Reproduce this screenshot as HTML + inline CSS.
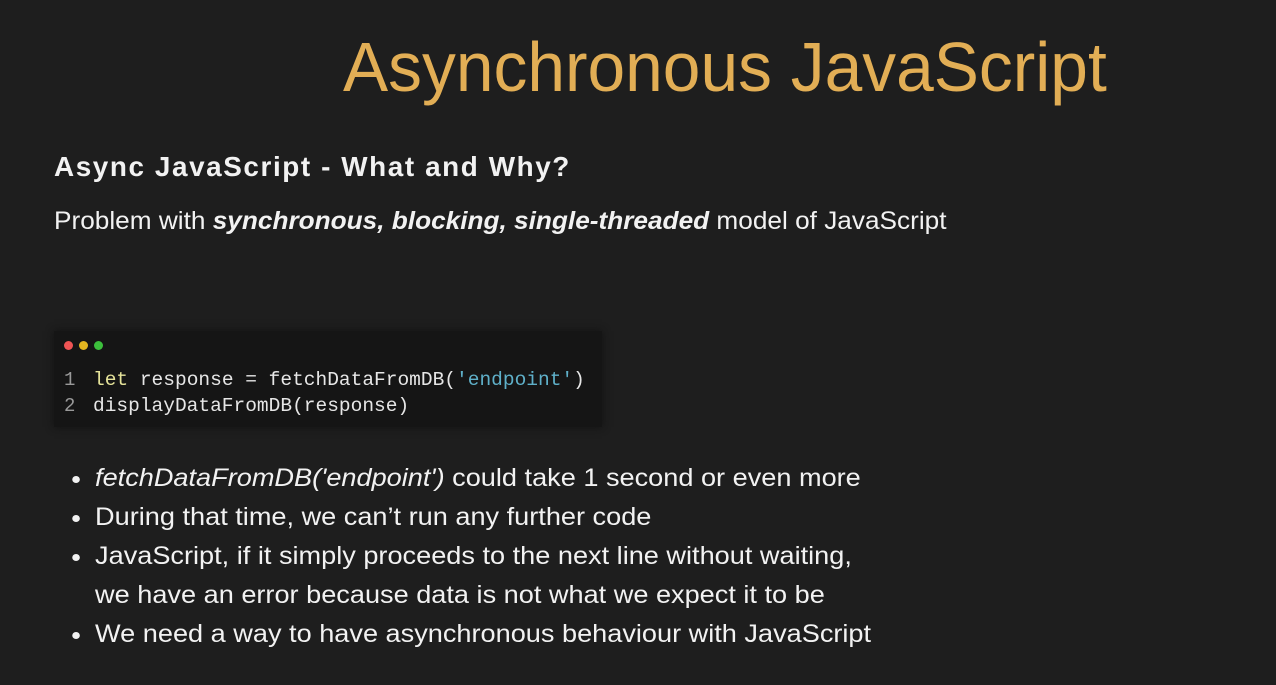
<!DOCTYPE html>
<html><head><style>
body{margin:0;width:1276px;height:685px;background:#1e1e1e;overflow:hidden;position:relative;font-family:"Liberation Sans",sans-serif;color:#f2f2f2}
.a{position:absolute;white-space:nowrap;transform-origin:left top}
.t{left:343px;top:27px;font-size:70px;color:#e2ae55;transform:scaleX(0.967)}
.h{left:54px;top:151px;font-size:28px;font-weight:bold;transform:scaleX(0.995);letter-spacing:1.6px}
.p{left:54px;top:207px;font-size:25px;transform:scaleX(1.048)}
.code{left:54px;top:331px;width:548px;height:96px;background:#151515;box-shadow:0 0 8px #111}
.dot{position:absolute;top:10px;width:9px;height:9px;border-radius:50%}
.m{font-family:"Liberation Mono",monospace;font-size:19px;color:#e6e6e6;position:absolute;left:39px;transform-origin:left top;transform:scaleX(1.027)}
.n{font-family:"Liberation Mono",monospace;font-size:19px;color:#999;position:absolute;left:10px}
.k{color:#e5e39a}
.s{color:#5fb0c9}
ul{position:absolute;left:69px;top:459px;margin:0;padding:0 0 0 24px;font-size:25px;line-height:39px;transform-origin:left top;transform:scaleX(1.085)}
li{white-space:nowrap}
</style></head><body>
<div class="a t">Asynchronous JavaScript</div>
<div class="a h">Async JavaScript - What and Why?</div>
<div class="a p">Problem with <b><i>synchronous, blocking, single-threaded</i></b> model of JavaScript</div>
<div class="a code">
<div class="dot" style="left:10px;background:#ef5454"></div>
<div class="dot" style="left:25px;background:#e3b520"></div>
<div class="dot" style="left:40px;background:#3cbf3c"></div>
<div class="n" style="top:38px">1</div>
<div class="n" style="top:64px">2</div>
<div class="m" style="top:38px"><span class="k">let</span> response = fetchDataFromDB(<span class="s">'endpoint'</span>)</div>
<div class="m" style="top:64px">displayDataFromDB(response)</div>
</div>
<ul>
<li><i>fetchDataFromDB('endpoint')</i> could take 1 second or even more</li>
<li>During that time, we can’t run any further code</li>
<li>JavaScript, if it simply proceeds to the next line without waiting,<br>we have an error because data is not what we expect it to be</li>
<li>We need a way to have asynchronous behaviour with JavaScript</li>
</ul>
</body></html>
